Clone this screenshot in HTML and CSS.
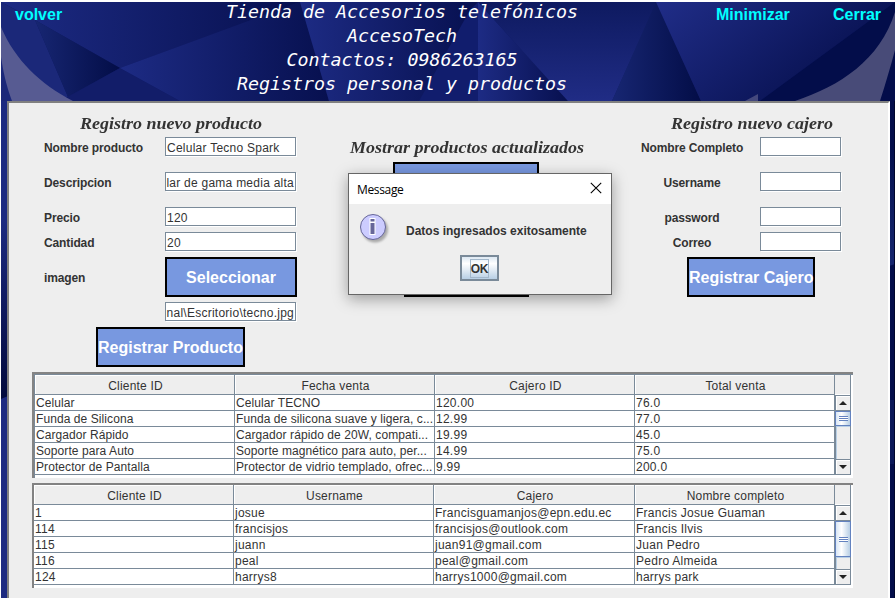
FILE: index.html
```html
<!DOCTYPE html>
<html lang="es">
<head>
<meta charset="utf-8">
<title>AccesoTech</title>
<link rel="stylesheet" href="styles.css">
</head>
<body>
<div class="window">
<svg class="backdrop" viewBox="1 2 894 596" preserveAspectRatio="none" aria-hidden="true">
<defs>
<linearGradient id="a" x1="0" x2="1"><stop offset="0" stop-color="#1d2b84"/><stop offset="1" stop-color="#07104f"/></linearGradient>
<linearGradient id="b" x1="0" x2="1"><stop offset="0" stop-color="#172672"/><stop offset="1" stop-color="#030d47"/></linearGradient>
<linearGradient id="c" x1="0" y1="0" x2="0" y2="1"><stop offset="0" stop-color="#0e1a60"/><stop offset="1" stop-color="#202c85"/></linearGradient>
<linearGradient id="d" x1="0" y1="0" x2="1" y2=".5"><stop offset="0" stop-color="#202d88"/><stop offset="1" stop-color="#060f4c"/></linearGradient>
<linearGradient id="e" x1="0" y1="0" x2="0" y2="1"><stop offset="0" stop-color="#1c2a80"/><stop offset=".4" stop-color="#1c2a80"/><stop offset="1" stop-color="#020a3c"/></linearGradient>
<linearGradient id="f" x1="0" y1="0" x2="0" y2="1"><stop offset="0" stop-color="#04104e"/><stop offset="1" stop-color="#16266f"/></linearGradient>
</defs>
<rect x="1" y="2" width="894" height="596" fill="#0c1761"/>
<path d="M1 2H300L120 68L35 20L1 2Z" fill="url(#a)"/>
<path d="M1 2L35 20L68 97L60 101H1Z" fill="#1b2879"/>
<path d="M35 20L120 68L68 97Z" fill="url(#b)"/>
<path d="M120 68L180 101H60Z" fill="#121d69"/>
<path d="M120 68L300 2L329 101H180Z" fill="url(#a)"/>
<path d="M300 2H478L420 101H329Z" fill="url(#a)"/>
<path d="M478 2V101H419L470 10Z" fill="#111d6d"/>
<path d="M478 2L568 101H478Z" fill="url(#a)"/>
<path d="M478 2H657L612 101H568Z" fill="url(#c)"/>
<path d="M656 2L701 101H612Z" fill="url(#b)"/>
<path d="M656 2H895L760 101H701Z" fill="url(#d)"/>
<path d="M895 2V101H760Z" fill="#030d4a"/>
<path d="M1 27C15 60 40 84 73 101H12C6 85 3 70 1 57Z" fill="#575b92"/>
<path d="M895 12C880 60 840 86 795 101H880C886 82 891 65 895 50Z" fill="#484b78"/>
<path d="M745 101L758 94V101Z" fill="#44487d"/>
<path d="M1 101H8V598H1Z" fill="#1d2a80"/>
<path d="M1 101H8V396L1 399Z" fill="url(#e)"/>
<path d="M889 101H895V598H889Z" fill="#030d4a"/>
<path d="M889 150H895V264L889 266Z" fill="url(#f)"/>
<path d="M889 400H895V464H889Z" fill="#0b1859"/>
<path d="M894 101V598H895V101Z" fill="#00062c"/>
</svg>
<header class="top">
<a class="link back">volver</a>
<h1 class="title">Tienda de Accesorios telefónicos<br>AccesoTech<br>Contactos: 0986263165<br>Registros personal y productos</h1>
<nav class="controls"><a class="link">Minimizar</a><a class="link">Cerrar</a></nav>
</header>
<main class="panel">
<div class="forms">
<section class="form product">
<h2 class="heading"><span class="fancy">Registro nuevo producto</span></h2>
<label class="label">Nombre producto</label><div class="field">Celular Tecno Spark</div>
<label class="label">Descripcion</label><div class="field end">lar de gama media alta</div>
<label class="label">Precio</label><div class="field">120</div>
<label class="label">Cantidad</label><div class="field">20</div>
<label class="label tall">imagen</label><button class="button pick">Seleccionar</button>
<div class="field end file">nal\Escritorio\tecno.jpg</div>
<button class="button save">Registrar Producto</button>
</section>
<section class="form updates">
<h2 class="heading"><span class="fancy">Mostrar productos actualizados</span></h2>
<button class="button first"></button>
<button class="button second"></button>
</section>
<section class="form cashier">
<h2 class="heading"><span class="fancy">Registro nuevo cajero</span></h2>
<label class="label">Nombre Completo</label><div class="field"></div>
<label class="label">Username</label><div class="field"></div>
<label class="label">password</label><div class="field"></div>
<label class="label">Correo</label><div class="field"></div>
<button class="button enroll">Registrar Cajero</button>
</section>
</div>
<div class="scroll sales">
<table class="grid">
<colgroup><col class="w200"><col class="w200"><col class="w200"><col class="w200"></colgroup>
<tr><th>Cliente ID</th><th>Fecha venta</th><th>Cajero ID</th><th>Total venta</th></tr>
<tr><td>Celular</td><td>Celular TECNO</td><td>120.00</td><td>76.0</td></tr>
<tr><td>Funda de Silicona</td><td>Funda de silicona suave y ligera, c...</td><td>12.99</td><td>77.0</td></tr>
<tr><td>Cargador Rápido</td><td>Cargador rápido de 20W, compati...</td><td>19.99</td><td>45.0</td></tr>
<tr><td>Soporte para Auto</td><td>Soporte magnético para auto, per...</td><td>14.99</td><td>75.0</td></tr>
<tr><td>Protector de Pantalla</td><td>Protector de vidrio templado, ofrec...</td><td>9.99</td><td>200.0</td></tr>
</table>
<div class="bar">
<div class="corner"></div>
<div class="arrow"><i class="up"></i></div>
<div class="thumb"><i class="grip"></i></div>
<div class="track"></div>
<div class="arrow"><i class="down"></i></div>
</div>
</div>
<div class="scroll staff">
<table class="grid">
<colgroup><col class="w200"><col class="w200"><col class="w201"><col class="w200"></colgroup>
<tr><th>Cliente ID</th><th>Username</th><th>Cajero</th><th>Nombre completo</th></tr>
<tr><td>1</td><td>josue</td><td>Francisguamanjos@epn.edu.ec</td><td>Francis Josue Guaman</td></tr>
<tr><td>114</td><td>francisjos</td><td>francisjos@outlook.com</td><td>Francis Ilvis</td></tr>
<tr><td>115</td><td>juann</td><td>juan91@gmail.com</td><td>Juan Pedro</td></tr>
<tr><td>116</td><td>peal</td><td>peal@gmail.com</td><td>Pedro Almeida</td></tr>
<tr><td>124</td><td>harrys8</td><td>harrys1000@gmail.com</td><td>harrys park</td></tr>
</table>
<div class="bar">
<div class="corner"></div>
<div class="arrow"><i class="up"></i></div>
<div class="thumb"><i class="grip"></i></div>
<div class="track"></div>
<div class="arrow"><i class="down"></i></div>
</div>
</div>
</main>
<div class="dialog" role="dialog">
<div class="dialog-title"><span>Message</span>
<svg width="12" height="12" viewBox="0 0 12 12"><path d="M.8 .8L11.2 11.2M11.2 .8L.8 11.2" stroke="#000" stroke-width="1.1"/></svg></div>
<div class="dialog-body">
<svg class="info" width="34" height="34" viewBox="0 0 34 34">
<defs><filter id="s" x="-20%" y="-20%" width="150%" height="150%"><feGaussianBlur stdDeviation="1.2"/></filter></defs>
<circle cx="16" cy="16.500" r="13" fill="#aaa" filter="url(#s)"/>
<circle cx="14" cy="14" r="12.5" fill="#ccccff" stroke="#666699"/>
<path d="M10 5H16V9H10ZM10 8.500H16V22H10Z" fill="#fff" transform="translate(.5)"/>
<path d="M11.500 6H15.500V8.500H11.500ZM11.500 10H15.500V21H11.500Z" fill="#666699"/>
</svg>
<p class="message">Datos ingresados exitosamente</p>
</div>
<button class="ok"><span>OK</span></button>
</div>
</div>
</body>
</html>
```
FILE: styles.css
```css
* { box-sizing: border-box; }
body { margin: 0; background: #fff; font: 12px "Liberation Sans", Arial, sans-serif; color: #333; overflow: hidden; }
.window { position: relative; margin: 2px 0 0 1px; width: 894px; height: 596px; overflow: hidden; }
.backdrop { position: absolute; inset: 0; width: 894px; height: 596px; }

.top { position: relative; display: grid; grid-template-columns: 201px 400px 1fr; height: 99px; }
.link { font-weight: bold; font-size: 16px; line-height: 26px; color: #0ff; }
.back { padding-left: 14px; }
.title { margin: -2px 0 0; font: italic 18.3px/24px "DejaVu Sans Mono", monospace; color: #fff; text-align: center; white-space: nowrap; }
.controls { display: flex; justify-content: space-between; padding: 0 14px 0 114px; }

.panel { position: relative; margin-left: 6px; width: 883px; height: 497px; background: #eee; border: solid; border-width: 2px 2px 0 2px; border-color: #808080 #fff #808080 #808080; }
.forms { display: flex; height: 269px; }
.form { display: grid; grid-template-rows: 34px 35px 35px 25px 25px 45px 25px 40px; align-items: start; }
.heading { margin: 0; font: italic bold 16px/20px "Liberation Serif", serif; white-space: nowrap; }
.fancy { display: inline-block; transform: scaleX(1.125); transform-origin: 0 0; }
.label { font-weight: bold; line-height: 22px; letter-spacing: -.12px; white-space: nowrap; }
.label.tall { line-height: 42px; }
.field { height: 19px; border: 1px solid #7a8a99; background: #fff; box-shadow: 1px 1px 0 #fff; line-height: 20px; padding: 0 1px; white-space: nowrap; overflow: hidden; letter-spacing: .25px; }
.field.end { display: flex; justify-content: flex-end; }
.button { height: 40px; padding: 2px 0 0; border: 2px solid #000; background: #7898e0; color: #fff; font: bold 16px "Liberation Sans", Arial, sans-serif; white-space: nowrap; }

.product { grid-template-columns: 121px 131px; margin-left: 35px; width: 252px; }
.product .heading { grid-column: 1 / 3; padding: 11px 0 0 36px; }
.pick { width: 132px; }
.file { grid-column: 2; }
.save { grid-column: 1 / 3; width: 149px; margin-left: 52px; }

.updates { margin-left: 53px; width: 240px; grid-template-rows: 59px 95px 40px; }
.updates .heading { padding: 35px 0 0 1px; }
.first { width: 146px; margin-left: 44px; }
.second { width: 125px; margin-left: 55px; }

.cashier { margin-left: 41px; width: 211px; grid-template-columns: 122px 81px; padding-left: 8px; }
.cashier .heading { grid-column: 1 / 3; padding: 11px 0 0 33px; }
.cashier .label { text-align: center; padding-right: 14px; }
.cashier .button { grid-column: 1 / 3; width: 128px; margin-left: 49px; }

.scroll { display: flex; margin-left: 23px; width: 821px; height: 106px; background: #fff; border: solid #828282; border-width: 2px 0 0 2px; overflow: hidden; }
.sales { border-color: #848484; box-shadow: inset 1px 1px 0 #7a8a99; padding: 1px 0 0 1px; }
.staff { margin-top: 5px; height: 105px; }
.grid { border-collapse: separate; border-spacing: 0; table-layout: fixed; width: 800px; flex: none; height: 100px; }
.staff .grid { width: 801px; }
.w200 { width: 200px; }
.w201 { width: 201px; }
.grid th, .grid td { padding: 1px 0 0 1px; height: 16px; border: solid #7a8a99; border-width: 0 1px 1px 0; font-weight: normal; line-height: 14px; text-align: left; white-space: nowrap; overflow: hidden; letter-spacing: .26px; }
.sales td:nth-child(-n+2) { letter-spacing: .08px; }
.grid th { height: 20px; background: #eee; text-align: center; line-height: 16px; padding: 3px 0 0 2px; letter-spacing: .2px; box-shadow: inset 1px 1px 0 #fff; }
.bar { display: flex; flex-direction: column; width: 16px; height: 100px; border-right: 1px solid #7a8a99; background: #eee; }
.corner { height: 20px; border-bottom: 1px solid #fff; }
.arrow { height: 16px; border: 1px solid #7a8a99; border-right: 0; box-shadow: inset 1px 1px 0 #fff; display: flex; align-items: center; justify-content: center; }
.up, .down { border: 4px solid transparent; border-top: 0; border-bottom: 4px solid #222; }
.down { border-bottom: 0; border-top: 4px solid #222; }
.thumb { height: 15px; border: 1px solid #6382bf; background: linear-gradient(90deg, #d8e6f5, #fff 40%, #b8cfe5); display: flex; align-items: center; justify-content: center; margin-right: -1px; }
.grip { width: 9px; height: 5px; background: repeating-linear-gradient(#6382bf 0 1px, #fff 1px 2px); }
.track { flex: 1; border-left: 1px solid #7a8a99; box-shadow: inset 1px 1px 0 #b8cfe5; }
.staff .thumb { height: 36px; }

.dialog { position: absolute; left: 347px; top: 171px; width: 264px; height: 122px; border: 1px solid #666; background: #eee; box-shadow: 0 4px 14px rgba(0,0,0,.35); }
.dialog-title { display: flex; align-items: center; justify-content: space-between; height: 30px; padding: 0 9px 0 8px; background: #fff; color: #000; font: 12px "Open Sans", "Noto Sans", sans-serif; letter-spacing: -.35px; }
.dialog-title svg { margin-top: -2px; }
.dialog-body { display: flex; height: 51px; padding: 9px 0 0 10px; }
.message { margin: 8px 0 0 13px; font-weight: bold; line-height: 20px; white-space: nowrap; }
.ok { display: flex; align-items: center; justify-content: center; margin-left: 111px; width: 39px; height: 26px; padding: 0; border: 2px solid #7a8a99; background: linear-gradient(#dde8f3, #fff 30%, #b8cfe5); font: bold 12px "Liberation Sans", Arial, sans-serif; color: #333; }
.ok span { border: 1px solid #a3b8cc; line-height: 16px; padding-top: 1px; letter-spacing: -.2px; }
```
